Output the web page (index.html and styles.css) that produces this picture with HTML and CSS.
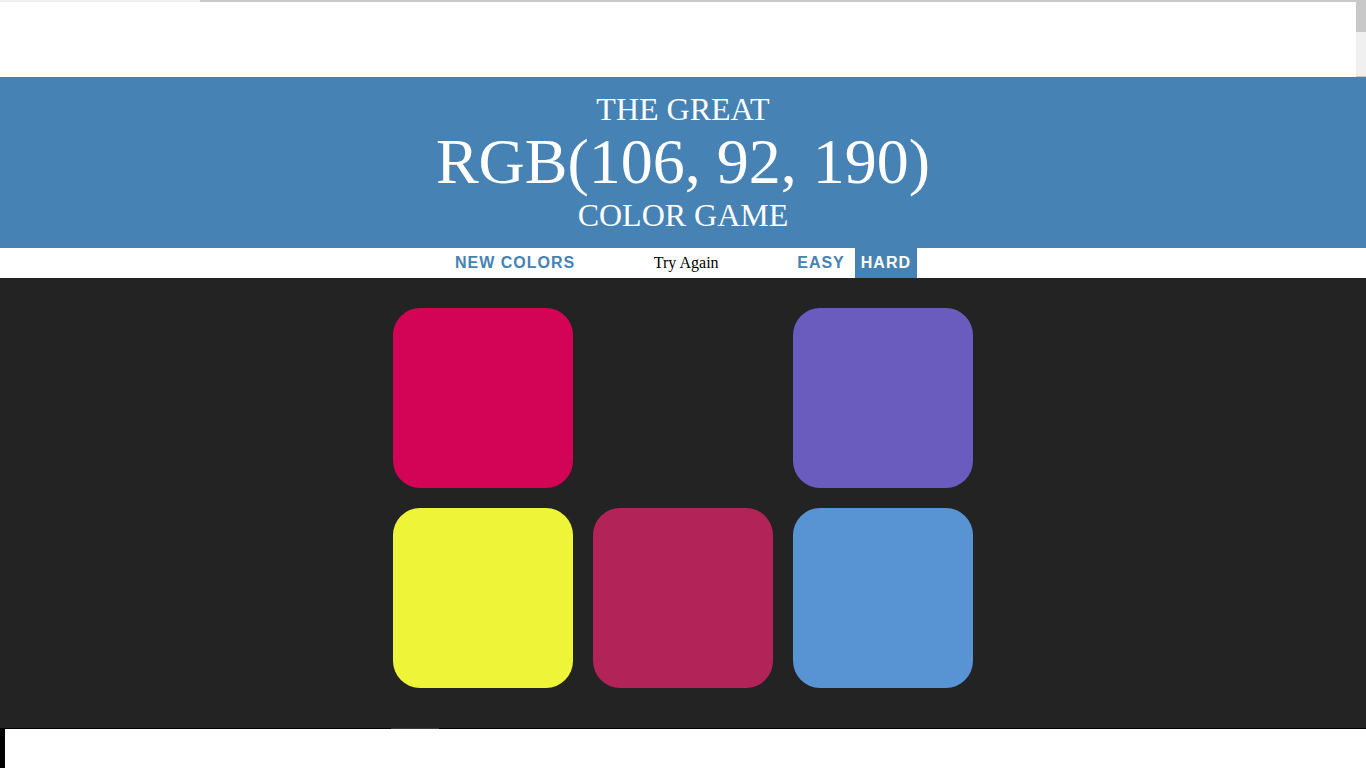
FILE: index.html
```html
<!DOCTYPE html>
<html lang="en">
<head>
<meta charset="utf-8">
<title>Color Game</title>
<link rel="stylesheet" href="styles.css">
</head>
<body>
<div class="frame">
  <div class="frame-main">
    <div class="hbar"><div class="hbar-track"></div><div class="hbar-thumb"></div></div>
  </div>
  <div class="vbar"><div class="vbar-thumb"></div><div class="vbar-track"></div></div>
</div>
<h1>The Great<br><span class="color-display">RGB(106, 92, 190)</span><br>Color Game</h1>
<div class="stripe">
  <button class="btn">New Colors</button>
  <span class="message">Try Again</span>
  <button class="btn mode">Easy</button>
  <button class="btn mode selected">Hard</button>
</div>
<div class="game">
  <div class="container">
    <div class="square sq-crimson"></div>
    <div class="square sq-hidden"></div>
    <div class="square sq-purple"></div>
    <div class="square sq-yellow"></div>
    <div class="square sq-maroon"></div>
    <div class="square sq-blue"></div>
  </div>
</div>
<div class="footer">
  <div class="rule"><div class="rule-a"></div><div class="rule-b"></div><div class="rule-c"></div></div>
  <div class="footer-body"><div class="footer-bar"></div></div>
</div>
</body>
</html>
```
FILE: styles.css
```css
html, body {
  margin: 0;
  padding: 0;
  height: 768px;
  overflow: hidden;
  background: #ffffff;
}

.frame {
  display: flex;
  height: 77px;
  background: #ffffff;
}
.frame-main {
  flex: 1;
}
.hbar {
  display: flex;
  height: 2px;
}
.hbar-track {
  width: 200px;
  background: #f0f0f0;
}
.hbar-thumb {
  flex: 1;
  background: #c8c8c8;
}
.vbar {
  width: 10px;
  display: flex;
  flex-direction: column;
  border-bottom: 1px solid #c8c8c8;
}
.vbar-thumb {
  height: 32px;
  background: #c8c8c8;
}
.vbar-track {
  flex: 1;
  background: #f0f0f0;
}

h1 {
  margin: 0;
  box-sizing: border-box;
  height: 171px;
  padding-top: 15px;
  background: #4682b4;
  color: #ffffff;
  text-align: center;
  text-transform: uppercase;
  font-family: "Liberation Serif", "Times New Roman", serif;
  font-weight: normal;
  font-size: 32px;
  line-height: 1.1;
}
.color-display {
  font-size: 200%;
}

.stripe {
  height: 30px;
  background: #ffffff;
  text-align: center;
  font-family: "Liberation Serif", "Times New Roman", serif;
  font-size: 16px;
  color: #000000;
}
.btn {
  height: 30px;
  padding: 0 6px;
  margin: 0;
  border: none;
  background: none;
  color: #4682b4;
  font-family: "Liberation Sans", Arial, sans-serif;
  font-weight: 700;
  font-size: 16px;
  letter-spacing: 1px;
  text-transform: uppercase;
  vertical-align: baseline;
}
.btn.selected {
  background: #4682b4;
  color: #ffffff;
}
.message {
  display: inline-block;
  width: 202px;
}

.game {
  height: 450px;
  background: #232323;
  padding-top: 20px;
  box-sizing: border-box;
}
.container {
  width: 600px;
  margin: 0 auto;
  display: flex;
  flex-wrap: wrap;
}
.square {
  width: 180px;
  height: 180px;
  margin: 10px;
  border-radius: 27px;
}
.sq-crimson { background: #d30456; }
.sq-hidden { background: #232323; }
.sq-purple { background: #6a5cbe; }
.sq-yellow { background: #eef538; }
.sq-maroon { background: #b22457; }
.sq-blue { background: #5893d4; }

.footer {
  height: 40px;
  display: flex;
  flex-direction: column;
}
.rule {
  display: flex;
  height: 1px;
}
.rule-a { width: 391px; background: #000000; }
.rule-b { width: 48px; background: #3a3a3a; }
.rule-c { flex: 1; background: #000000; }
.footer-body {
  flex: 1;
  background: #ffffff;
}
.footer-bar {
  width: 5px;
  height: 100%;
  background: #000000;
}
```
